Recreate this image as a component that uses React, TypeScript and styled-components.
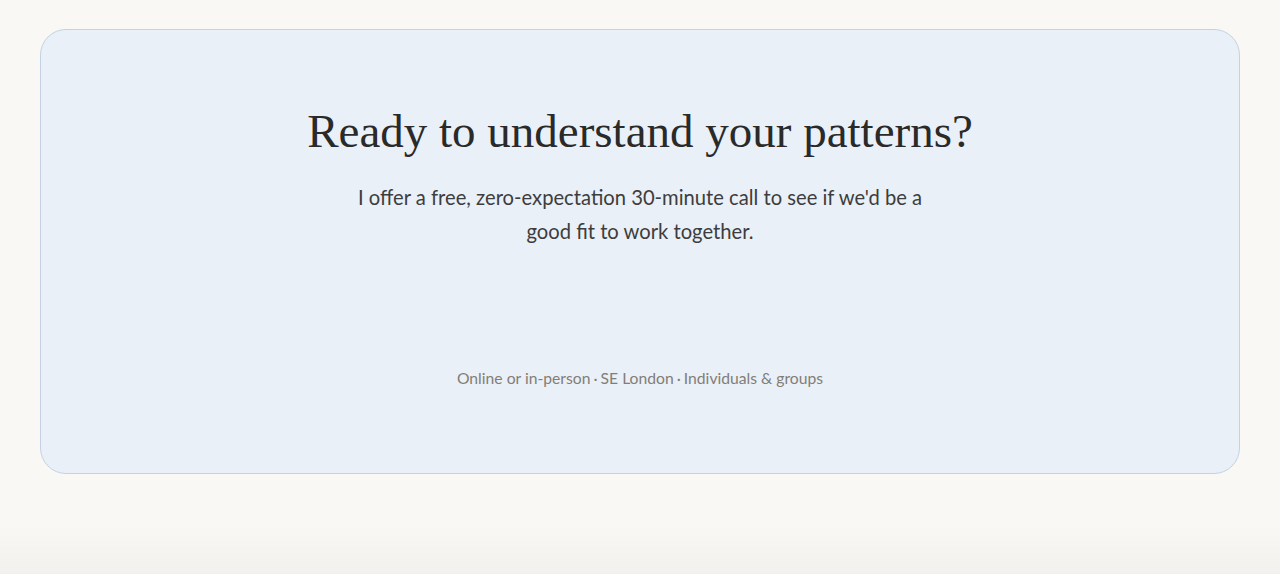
import styled, { createGlobalStyle } from 'styled-components'

const GlobalStyle = createGlobalStyle`
  html, body {
    margin: 0;
    padding: 0;
    background: #f9f8f5;
  }
  body {
    font-family: 'Lato', 'Liberation Sans', sans-serif;
    color: #2b2b2b;
  }
`

function App() {
  return (
    <>
      <GlobalStyle />
      <Section>
        <Card>
          <Heading>Ready to understand your patterns?</Heading>
          <Lead>
            I offer a free, zero-expectation 30-minute call to see if we'd be a good fit to work together.
          </Lead>
          <Meta>
            Online or in-person<Dot>·</Dot>SE London<Dot>·</Dot>Individuals &amp; groups
          </Meta>
        </Card>
      </Section>
      <BottomFade />
    </>
  )
}

const Section = styled.section`
  padding: 29px 40px 100px;
`

const Card = styled.div`
  display: flex;
  flex-direction: column;
  align-items: center;
  text-align: center;
  background: #e9f0f8;
  border: 1px solid #c3d3e4;
  border-radius: 26px;
  padding: 72px 40px 84px;
`

const Heading = styled.h2`
  margin: 0;
  font-family: 'Liberation Serif', 'DejaVu Serif', serif;
  font-weight: 400;
  font-size: 47px;
  line-height: 58px;
  color: #2a2a2a;
`

const Lead = styled.p`
  margin: 20px 0 0;
  max-width: 590px;
  font-size: 20.2px;
  line-height: 34px;
  color: #3d3d3d;
`

const Meta = styled.p`
  margin: 119px 0 0;
  font-size: 15.7px;
  line-height: 22px;
  color: #837d77;
`

const Dot = styled.span`
  margin: 0 3px;
`

const BottomFade = styled.div`
  position: fixed;
  left: 0;
  right: 0;
  bottom: 0;
  height: 48px;
  background: linear-gradient(to bottom, rgba(242, 241, 238, 0), #f1f0ed);
  pointer-events: none;
`

export default App
